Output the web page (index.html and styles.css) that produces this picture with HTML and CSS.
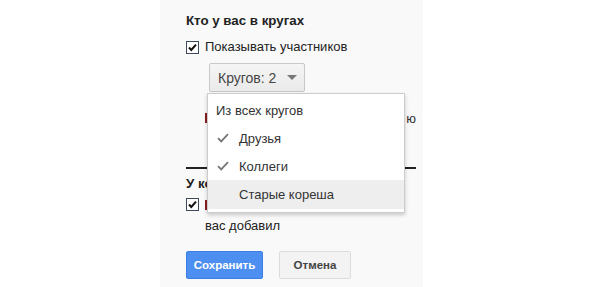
FILE: index.html
```html
<!DOCTYPE html>
<html lang="ru">
<head>
    <meta charset="UTF-8">
    <title>Круги</title>
    <link rel="stylesheet" href="styles.css">
</head>
<body>
    <div class="panel">
        <h2 class="title">Кто у вас в кругах</h2>

        <label class="check-row">
            <svg class="box" width="13" height="13" viewBox="0 0 13 13">
                <rect x="0.5" y="0.5" width="12" height="12" fill="#fff" stroke="#3d4a5c"/>
                <path d="M3 6.5 L5.3 9 L10 3.6" fill="none" stroke="#111" stroke-width="2"/>
            </svg>
            <span>Показывать участников</span>
        </label>

        <div class="select-wrap">
            <div class="select">
                <span>Кругов: 2</span>
                <span class="arrow"></span>
            </div>

            <div class="note">
                <span class="mark"></span>
                <span class="note-text">ю</span>
            </div>

            <!-- выпадающее меню поверх формы -->
            <ul class="menu">
                <li class="menu-item">Из всех кругов</li>
                <li class="menu-item">
                    <svg class="tick" width="12" height="10" viewBox="0 0 12 10">
                        <path d="M1 5.2 L4.2 8.4 L11 1.2" fill="none" stroke="#777" stroke-width="1.8"/>
                    </svg>
                    Друзья
                </li>
                <li class="menu-item">
                    <svg class="tick" width="12" height="10" viewBox="0 0 12 10">
                        <path d="M1 5.2 L4.2 8.4 L11 1.2" fill="none" stroke="#777" stroke-width="1.8"/>
                    </svg>
                    Коллеги
                </li>
                <li class="menu-item active"><span class="tick"></span>Старые кореша</li>
            </ul>
        </div>

        <hr class="divider">

        <h2 class="title">У кого вы в кругах</h2>

        <label class="check-row top">
            <svg class="box" width="13" height="13" viewBox="0 0 13 13">
                <rect x="0.5" y="0.5" width="12" height="12" fill="#fff" stroke="#3d4a5c"/>
                <path d="M3 6.5 L5.3 9 L10 3.6" fill="none" stroke="#111" stroke-width="2"/>
            </svg>
            <span class="two-lines">
                <span class="mark"></span><br>
                вас добавил
            </span>
        </label>

        <div class="buttons">
            <button class="btn save">Сохранить</button>
            <button class="btn cancel">Отмена</button>
        </div>
    </div>
</body>
</html>
```

FILE: styles.css
```css
body {
    margin: 0;
    background: #fff;
    font-family: 'Liberation Sans', Arial, sans-serif;
    font-size: 13px;
    color: #222;
}

.panel {
    margin-left: 160px;
    width: 237px;
    height: 287px;
    padding: 13px 0 0 26px;
    background: #f9f9f9;
}

.title {
    margin: 0;
    font-size: 13.3px;
    line-height: 16px;
    font-weight: bold;
    color: #222;
}

.check-row {
    display: flex;
    align-items: center;
    gap: 6px;
    margin-top: 10px;
    line-height: 16px;
    color: #222;
}

.check-row.top {
    align-items: flex-start;
    margin-top: 2px;
    line-height: 21px;
}

.check-row.top .box {
    margin-top: 4px;
}

.box {
    flex: none;
}

.two-lines .mark {
    display: inline-block;
    vertical-align: -1px;
}

.select-wrap {
    position: relative;
    margin-top: 8px;
}

.select {
    margin-left: 23px;
    width: 96px;
    height: 29px;
    border: 1px solid #c8c8c8;
    border-radius: 2px;
    background: linear-gradient(#f5f5f5, #eaeaea);
    display: flex;
    align-items: center;
    padding-left: 8px;
    box-sizing: border-box;
    color: #444;
    font-size: 14px;
}

.arrow {
    margin-left: 11px;
    width: 0;
    height: 0;
    border-left: 5px solid transparent;
    border-right: 5px solid transparent;
    border-top: 5px solid #777;
}

.note {
    display: flex;
    justify-content: space-between;
    align-items: center;
    margin-top: 17px;
    margin-left: 19px;
    width: 211px;
    height: 18px;
}

.mark {
    flex: none;
    width: 3px;
    height: 10px;
    background: #8b1c1c;
}

.note-text {
    color: #333;
}

.menu {
    position: absolute;
    left: 21px;
    top: 30px;
    width: 198px;
    margin: 0;
    padding: 2px 0 3px;
    list-style: none;
    background: #fff;
    border: 1px solid #ccc;
    box-shadow: 0 2px 4px rgba(0, 0, 0, 0.2);
    box-sizing: border-box;
}

.menu-item {
    display: flex;
    align-items: center;
    height: 28px;
    padding-left: 8px;
    color: #333;
}

.tick {
    flex: none;
    width: 12px;
    margin: 0 10px 0 1px;
}

.menu-item.active {
    height: 29px;
    background: #eee;
}

.divider {
    margin: 0;
    margin-top: 40px;
    width: 230px;
    border: none;
    border-top: 2px solid #222;
}

.divider + .title {
    margin-top: 7px;
}

.buttons {
    display: flex;
    gap: 16px;
    margin-top: 15px;
}

.btn {
    height: 28px;
    border-radius: 2px;
    font-family: 'Liberation Sans', Arial, sans-serif;
    font-size: 11.5px;
    font-weight: bold;
    padding: 0;
}

.save {
    width: 77px;
    background: #4d8ff0;
    border: 1px solid #3d7ee6;
    color: #fff;
}

.cancel {
    width: 72px;
    background: #f3f3f3;
    border: 1px solid #dcdcdc;
    color: #444;
}
```
